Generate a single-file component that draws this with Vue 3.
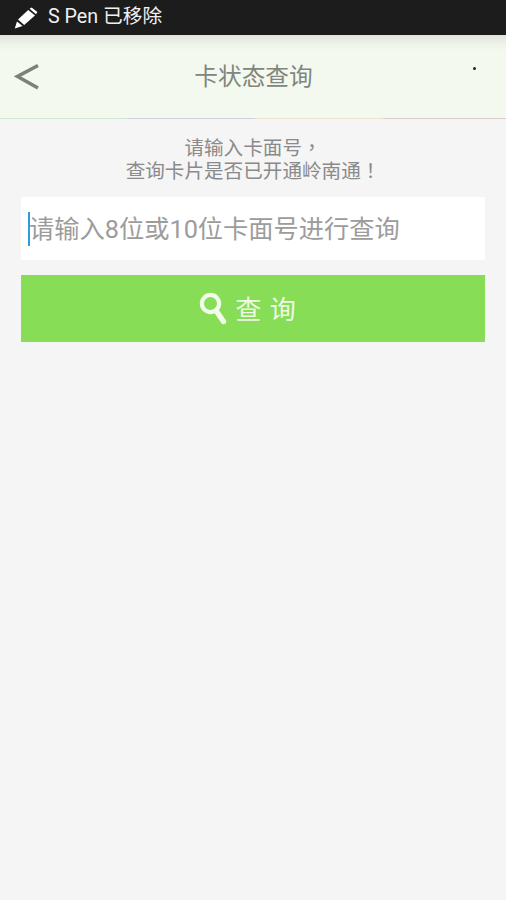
<script setup>
</script>

<template>
  <div class="screen">
    <div class="status">
      <svg class="pen" viewBox="0 0 24 22" width="24" height="22">
        <path d="M0.8 21.4 L3 14.4 L8.6 19 Z" fill="#fff" />
        <path d="M4 12.6 L14.2 3 L21 8.6 L10.2 18 Z" fill="#fff" />
        <path d="M15.6 1.8 L17.6 0.4 L23.4 5 L22 7.2 Z" fill="#fff" />
      </svg>
      <span class="status-text">S Pen 已移除</span>
    </div>
    <header class="bar">
      <svg class="back" viewBox="0 0 26 28" width="26" height="28">
        <path d="M24 2.5 L3.5 13.5 L24 25" fill="none" stroke="#7b8279" stroke-width="3.6" />
      </svg>
      <h1 class="title">卡状态查询</h1>
      <i class="dot"></i>
    </header>
    <main class="body">
      <p class="hint">
        <span class="hint-line">请输入卡面号<span class="punct">，</span></span>
        <span class="hint-line">查询卡片是否已开通岭南通<span class="punct">！</span></span>
      </p>
      <div class="field"><i class="caret"></i><span class="placeholder">请输入8位或10位卡面号进行查询</span></div>
      <button class="btn" type="button">
        <svg viewBox="0 0 28 34" width="28" height="34">
          <circle cx="11.5" cy="11.5" r="8.6" fill="none" stroke="#f2fbe9" stroke-width="4.2" />
          <path d="M18 20 L24.5 29.5" stroke="#f2fbe9" stroke-width="5.4" stroke-linecap="round" />
        </svg>
        <span class="btn-text">查 询</span>
      </button>
    </main>
  </div>
</template>

<style scoped>
.screen {
  width: 506px;
  height: 900px;
  background: #f5f5f5;
  font-family: "Roboto", "Noto Sans CJK SC", sans-serif;
  overflow: hidden;
}
.status {
  height: 35px;
  background: #1c1c1c;
  display: flex;
  align-items: center;
  padding-left: 14px;
  gap: 10px;
  box-sizing: border-box;
}
.pen { flex: none; }
.status-text {
  color: #f0f0f0;
  font-size: 19.7px;
  line-height: 32px;
  margin-top: -2px;
}
.bar {
  height: 84px;
  box-sizing: border-box;
  position: relative;
  display: flex;
  align-items: center;
  justify-content: center;
  background: linear-gradient(#dfe3db 0, #eef3ea 9px, #f3f9ef 16px);
  border-bottom: 1px solid;
  border-image: linear-gradient(90deg, #d3e8d0 0, #d3e8d0 25%, #cfd0dc 26%, #cfd0dc 50%, #e9e6d2 51%, #e9e6d2 75%, #d8ccd0 76%, #d8ccd0 100%) 1;
}
.back {
  position: absolute;
  left: 14px;
  top: 28px;
}
.title {
  margin: 0;
  color: #80867e;
  font-size: 23.7px;
  font-weight: 400;
  line-height: 30px;
  padding-left: 1px;
}
.dot {
  position: absolute;
  left: 473px;
  top: 32px;
  width: 3px;
  height: 3px;
  border-radius: 50%;
  background: #222;
}
.body {
  padding: 0 21px;
}
.hint {
  margin: 0;
  padding-top: 18px;
  color: #8a8a8a;
  font-size: 19.6px;
  text-align: center;
}
.hint-line {
  display: block;
  height: 23px;
  line-height: 23px;
  overflow: visible;
}
.punct {
  font-family: "Noto Sans CJK TC", sans-serif;
  line-height: 1;
}
.field {
  margin-top: 14px;
  height: 63px;
  background: #fff;
  display: flex;
  align-items: center;
  padding-left: 8px;
  position: relative;
}
.caret {
  position: absolute;
  left: 7px;
  top: 15px;
  width: 2px;
  height: 34px;
  background: #2f9bdd;
}
.placeholder {
  color: #9c9c9c;
  font-size: 25.25px;
  line-height: 34px;
  margin-top: 3px;
}
.btn {
  margin-top: 15px;
  width: 464px;
  height: 67px;
  border: 0;
  padding: 0 10px 0 0;
  background: #87dd56;
  display: flex;
  align-items: center;
  justify-content: center;
  gap: 8px;
  font-family: inherit;
}
.btn-text {
  color: #eef9e2;
  font-size: 26px;
  line-height: 34px;
  letter-spacing: 1px;
  white-space: pre;
  margin-top: 2px;
}
</style>
